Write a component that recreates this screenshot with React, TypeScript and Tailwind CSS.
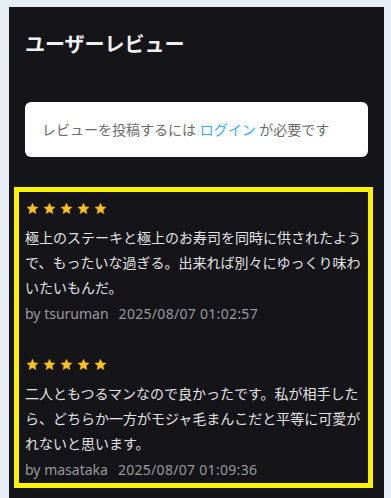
import React from "react";

const Star = () => (
  <svg width="13" height="13" viewBox="0 0 24 24" className="shrink-0">
    <path
      d="M12 1.8l3.09 6.86 7.41.78-5.56 5 1.6 7.36L12 18.05 5.46 21.8l1.6-7.36-5.56-5 7.41-.78z"
      fill="#fbc31f"
      stroke="#d9a012"
      strokeWidth="0.8"
      strokeLinejoin="round"
    />
  </svg>
);

const Stars = () => (
  <div className="flex h-[14px] items-center gap-[4px] pl-[1px]">
    <Star />
    <Star />
    <Star />
    <Star />
    <Star />
  </div>
);

type Review = { text: string; user: string; date: string };

const reviews: Review[] = [
  {
    text: "極上のステーキと極上のお寿司を同時に供されたようで、もったいな過ぎる。出来れば別々にゆっくり味わいたいもんだ。",
    user: "tsuruman",
    date: "2025/08/07 01:02:57",
  },
  {
    text: "二人ともつるマンなので良かったです。私が相手したら、どちらか一方がモジャ毛まんこだと平等に可愛がれないと思います。",
    user: "masataka",
    date: "2025/08/07 01:09:36",
  },
];

export default function App() {
  return (
    <div
      className="min-h-screen bg-[#e9edf5] pl-[9px] pr-[7px] pt-[7px] overflow-hidden"
      style={{ fontFamily: '"Noto Sans", "Noto Sans CJK JP", sans-serif' }}
    >
      <div className="min-h-[520px] bg-[#141419] px-4">
        <h2 className="pt-[24px] text-[20px] font-bold leading-[28px] text-[#f0f0f0]">
          ユーザーレビュー
        </h2>
        <div className="mt-[43px] flex h-[55px] items-center rounded-md bg-white pl-[17px] text-[14px] text-[#6b6b6b]">
          <span>
            レビューを投稿するには <span className="text-[#3aa9ef]">ログイン</span> が必要です
          </span>
        </div>
        <div className="-ml-[11px] -mr-[5px] mt-[30px] border-[5px] border-[#fff200] pl-[6px] pb-[3px] pt-[9px]">
          {reviews.map((r, i) => (
            <div key={i} className={i > 0 ? "mt-[33px]" : ""}>
              <Stars />
              <p className="mt-[10px] text-[14px] leading-[25px] text-[#e2e2e2]">
                {r.text}
              </p>
              <div className="mt-[4px] text-[14px] leading-[20px] text-[#9a9a9a]">
                <span>by {r.user}</span>
                <span className="ml-[10px] tracking-[0.3px]">{r.date}</span>
              </div>
            </div>
          ))}
        </div>
      </div>
    </div>
  );
}
